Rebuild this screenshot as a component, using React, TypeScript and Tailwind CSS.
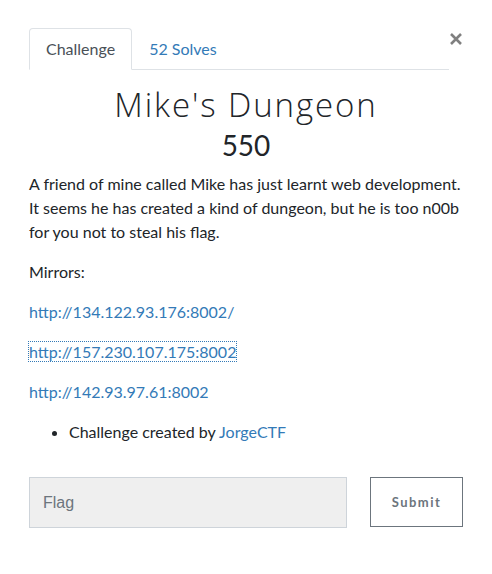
export default function App() {
  const font = { fontFamily: "Lato, 'Open Sans', sans-serif" };
  return (
    <div className="w-[492px] h-[574px] bg-white text-[#212529]" style={font}>
      <div className="px-[29px] pt-[28px]">
        <div className="flex items-end">
          <div className="flex flex-1 border-b border-[#dee2e6]">
            <div className="-mb-px h-[42px] px-4 pt-[8px] border border-[#dee2e6] border-b-white rounded-t-[4px] bg-white text-[16px] leading-6 text-[#495057]">
              Challenge
            </div>
            <div className="h-[41px] px-[17px] pt-[9px] text-[16px] leading-6 text-[#337ab7]">52 Solves</div>
          </div>
          <div className="w-[14px] self-stretch relative">
            <svg className="absolute left-[1px] top-[5px]" width="12" height="12" viewBox="0 0 12 12">
              <path d="M1 1 L11 11 M11 1 L1 11" stroke="#808080" strokeWidth="2.6" strokeLinecap="butt" />
            </svg>
          </div>
        </div>
        <h3 className="mt-[16px] text-center text-[33px] leading-[38px] font-light tracking-[1.9px] text-[#212529]" style={{ fontFamily: "'Open Sans', Lato, sans-serif" }}>
          Mike's Dungeon
        </h3>
        <h4 className="mt-[4px] text-center text-[28px] leading-[34px] font-normal text-[#212529]">550</h4>
        <div className="mt-[10px] text-[16px] leading-6">
          <p>A friend of mine called Mike has just learnt web development. It seems he has created a kind of dungeon, but he is too n00b for you not to steal his flag.</p>
          <p className="mt-4">Mirrors:</p>
          <p className="mt-4"><a className="text-[#337ab7]">http://134.122.93.176:8002/</a></p>
          <p className="mt-4"><a className="text-[#337ab7] outline outline-1 outline-dotted outline-[#337ab7]">http://157.230.107.175:8002</a></p>
          <p className="mt-4"><a className="text-[#337ab7]">http://142.93.97.61:8002</a></p>
          <ul className="mt-4 pl-10 list-disc">
            <li>Challenge created by <a className="text-[#337ab7]">JorgeCTF</a></li>
          </ul>
        </div>
        <div className="mt-[33px] flex gap-[23px]">
          <div className="w-[318px] h-[51px] border border-[#ced4da] bg-[#efefef] flex items-center pl-[13px] text-[16px] text-[#6c757d]" style={{ fontFamily: "'Liberation Sans', Arial, sans-serif" }}>
            Flag
          </div>
          <div className="w-[93px] h-[50px] pt-[2px] border border-[#6c757d] flex items-center justify-center text-[13px] font-bold tracking-[1.5px] text-[#6c757d]">
            Submit
          </div>
        </div>
      </div>
    </div>
  );
}
